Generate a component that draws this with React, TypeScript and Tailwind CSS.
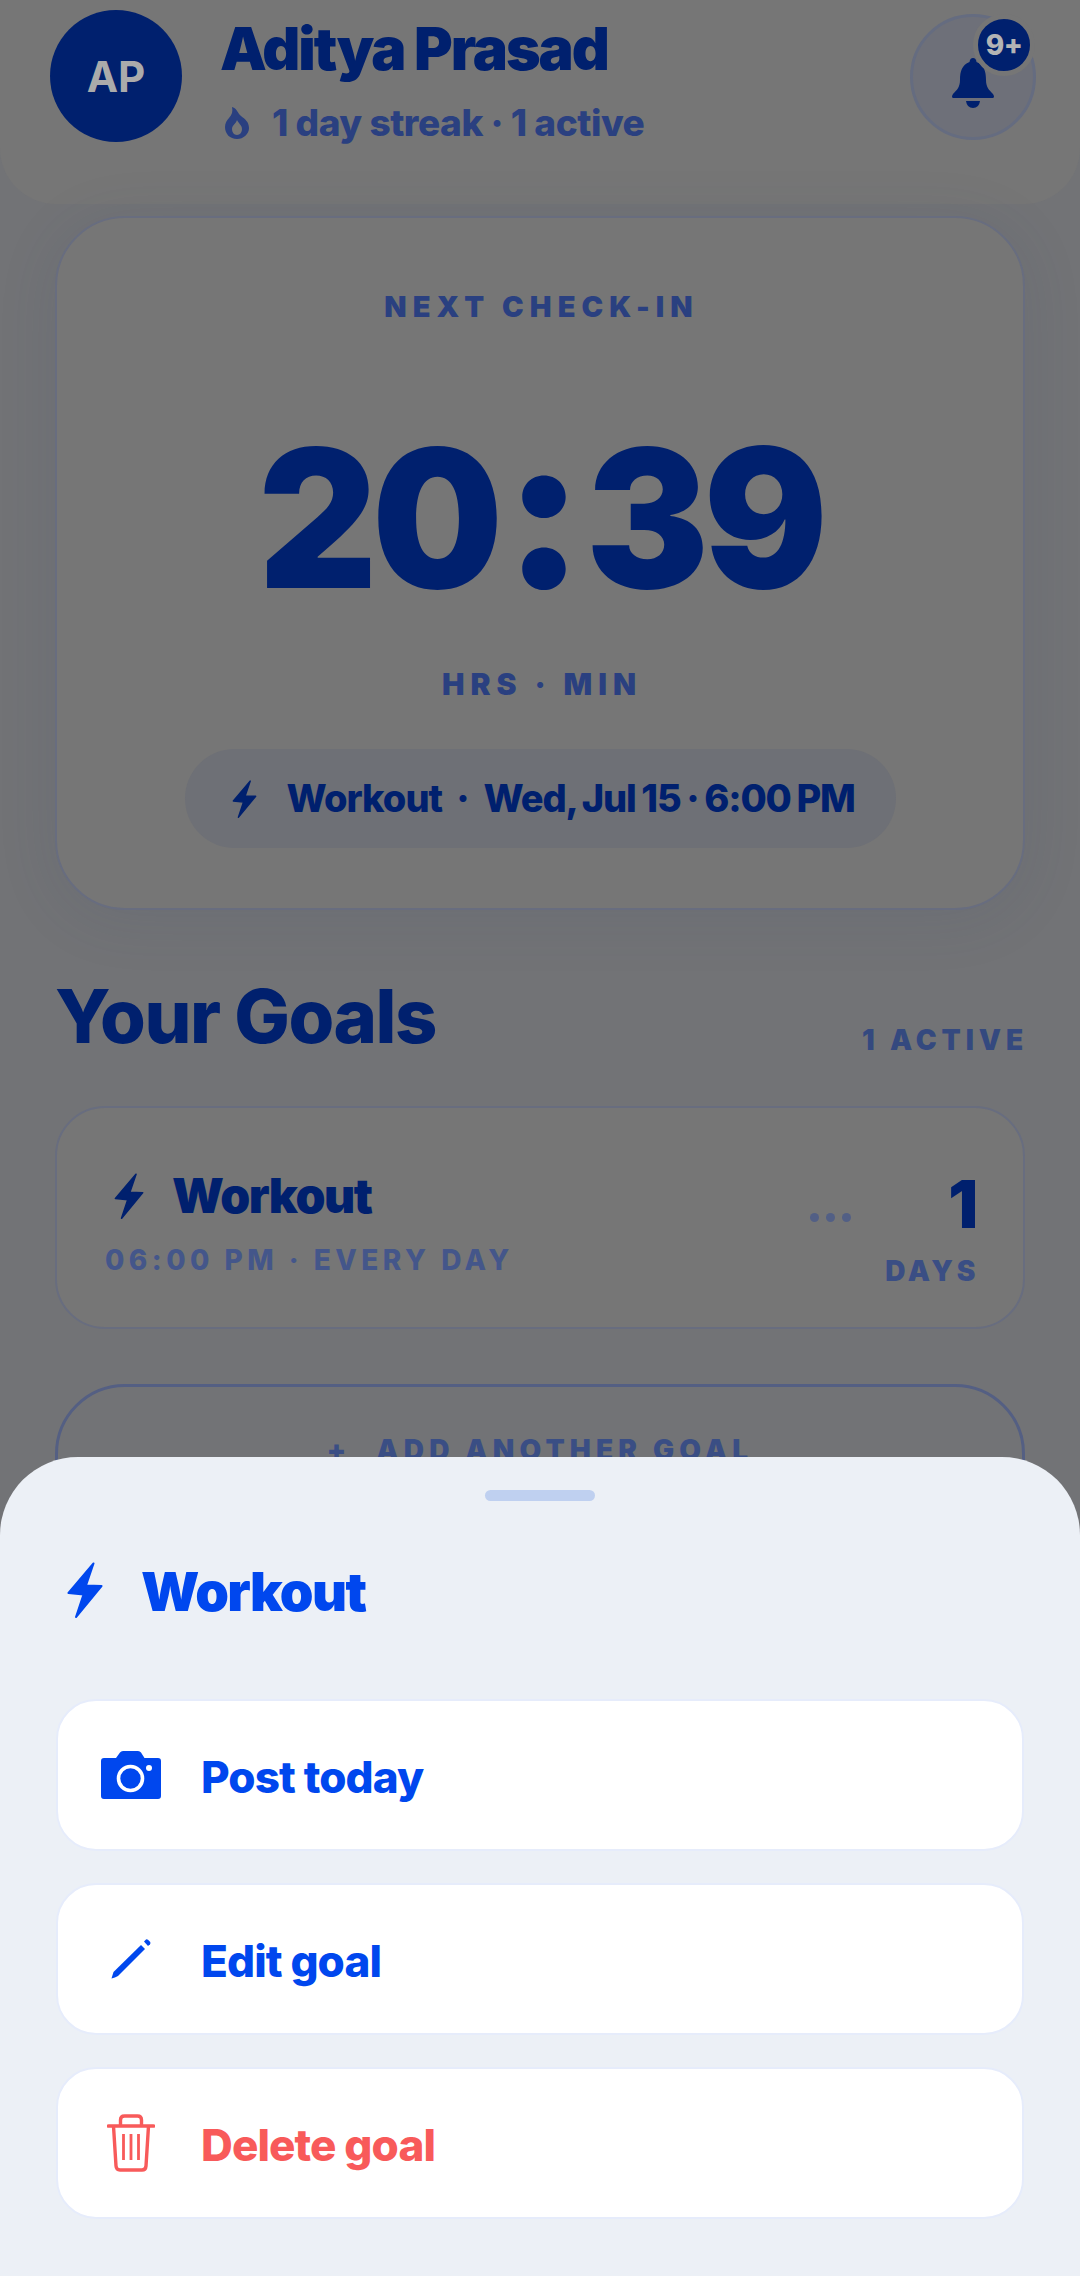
function Bolt({ className }: { className: string }) {
  return (
    <svg viewBox="0 0 36 56" className={className} aria-hidden="true">
      <path d="M26.5 1.5 L1.5 31 L16.5 32.5 L9 55 L34.5 24 L19 23.5 Z" fill="currentColor" stroke="currentColor" strokeWidth="2" strokeLinejoin="round" />
    </svg>
  );
}

function Camera() {
  return (
    <svg viewBox="0 0 60 48" className="w-[60px] h-[48px] text-[#0047ee]" aria-hidden="true">
      <path d="M3 7 H15 L19 1.5 Q20 0 22 0 H37 Q39 0 40 1.5 L43.5 7 H57 Q60 7 60 10 V45 Q60 48 57 48 H3 Q0 48 0 45 V10 Q0 7 3 7 Z" fill="currentColor" />
      <circle cx="29.5" cy="27.5" r="12" fill="none" stroke="#fff" strokeWidth="3.6" />
      <circle cx="48" cy="17" r="3" fill="#fff" />
    </svg>
  );
}

function Pencil() {
  return (
    <svg viewBox="0 0 40 40" className="w-[40px] h-[40px] text-[#0047ee]" aria-hidden="true">
      <path d="M0.5 39.5 L2.5 33 L30 6 L34 10 L7 37 Q4 38.5 0.5 39.5 Z" fill="currentColor" />
      <path d="M33 2.5 L35 0.4 Q36 0 37 0.8 L39 2.8 Q40 4 39 5.2 L37 7 Z" fill="currentColor" />
    </svg>
  );
}

function Trash() {
  return (
    <svg viewBox="0 0 48 58" className="w-[48px] h-[58px] text-[#f85a5a]" fill="none" stroke="currentColor" aria-hidden="true">
      <path d="M1.5 12 H46.5" strokeWidth="3.6" strokeLinecap="round" />
      <path d="M13.5 11 V6 Q13.5 2 17.5 2 H30.5 Q34.5 2 34.5 6 V11" strokeWidth="3.4" />
      <path d="M6.5 12 L9 52 Q9.3 56 13 56 H35 Q38.7 56 39 52 L41.5 12" strokeWidth="3.4" />
      <path d="M16.5 20 V46 M24 20 V46 M31.5 20 V46" strokeWidth="2.8" />
    </svg>
  );
}

function Bell() {
  return (
    <svg viewBox="0 0 44 50" className="w-[44px] h-[50px] text-[#00206e]" aria-hidden="true">
      <path d="M22 0 Q25 0 25.5 4 C33 7 35 13 35 22 C35 29 38 32 42 36 Q44 39 42 40 H2 Q0 39 2 36 C6 32 9 29 9 22 C9 13 11 7 18.5 4 Q19 0 22 0 Z" fill="currentColor" />
      <path d="M15 43 H29 Q28 50 22 50 Q16 50 15 43 Z" fill="currentColor" />
    </svg>
  );
}

function Flame() {
  return (
    <svg viewBox="0 0 26 32" className="w-[26px] h-[32px] text-[#2a4080]" aria-hidden="true">
      <path fillRule="evenodd" fill="currentColor" d="M8 0 C14 2 13 6 17 9 C21 12 25 15 25 21 C25 27 19.5 32 13 32 C6 32 1 27 1 20 C1 16 3 13 5 11 C8 8 9 4 8 0 Z M13 13 C14 16 18 18 18 22 C18 25 16 28 13 28 C10 28 8 25 8 22 C8 18 12 17 13 13 Z" />
    </svg>
  );
}

function Row({ icon, label, color }: { icon: React.ReactNode; label: string; color: string }) {
  return (
    <div className="h-[152px] rounded-[40px] bg-white border-2 border-[#e6ecfb] flex items-center">
      <div className="w-[143px] pl-[3px] flex justify-center shrink-0">{icon}</div>
      <span className={`pt-[3px] text-[44px] font-extrabold tracking-[-0.02em] ${color}`}>{label}</span>
    </div>
  );
}

export default function App() {
  return (
    <div className="relative w-[1080px] h-[2276px] overflow-hidden bg-[#727376] font-['Inter',sans-serif]">
      <header className="h-[204px] bg-[#767676] rounded-b-[56px] flex items-start justify-between pl-[50px] pr-[44px] pt-[10px]">
        <div className="flex items-start gap-[38px]">
          <div className="w-[132px] h-[132px] rounded-full bg-[#00206e] flex items-center justify-center text-[#ababab] text-[42px] font-bold">AP</div>
          <div className="pt-[5px]">
            <div className="text-[59px] leading-[68px] font-black tracking-[-0.035em] text-[#00206e]">Aditya Prasad</div>
            <div className="mt-[20px] ml-[4px] flex items-center gap-[22px] text-[37px] leading-[40px] font-extrabold tracking-[-0.012em] text-[#2a4080]">
              <Flame />
              <span>1 day streak · 1 active</span>
            </div>
          </div>
        </div>
        <div className="relative mt-[4px] w-[126px] h-[126px] rounded-full bg-[#6e7079] border-[3px] border-[#656c80] flex items-center justify-center">
          <div className="mt-[12px]"><Bell /></div>
          <div className="absolute -top-[3px] -right-[2px] w-[62px] h-[62px] rounded-full bg-[#00206e] border-[5px] border-[#767676] flex items-center justify-center text-[#b4b4b4] text-[28px] font-extrabold tracking-[-0.02em]">9+</div>
        </div>
      </header>

      <main className="px-[55px]">
        <section className="mt-[12px] h-[694px] rounded-[70px] bg-[#767676] border-2 border-[#686d7f] flex flex-col items-center shadow-[0_8px_60px_rgba(60,70,110,0.12)]">
          <div className="mt-[72px] ml-[3px] text-[29px] leading-[34px] font-black tracking-[0.21em] text-[#2a4080]">NEXT CHECK-IN</div>
          <div className="mt-[104px] h-[180px] flex items-center text-[193px] leading-none font-black tracking-[-0.03em] text-[#00206e] scale-x-[0.955]">
            <span>20</span><span className="mx-[9px] text-[215px] -translate-y-[9px] scale-x-[1.05]">:</span><span>39</span>
          </div>
          <div className="mt-[58px] ml-[4px] text-[30px] leading-[36px] font-black tracking-[0.2em] text-[#2a4080]">HRS · MIN</div>
          <div className="mt-[47px] w-[711px] h-[99px] rounded-full bg-[#6e7076] flex items-center pl-[47px] text-[#00206e]">
            <Bolt className="w-[25px] h-[38px]" />
            <span className="ml-[30px] text-[38px] font-extrabold tracking-[-0.025em]">Workout</span>
            <span className="ml-[14px] text-[38px] font-extrabold">·</span>
            <span className="ml-[14px] text-[38px] font-extrabold tracking-[-0.03em] [word-spacing:-0.04em]">Wed, Jul 15 · 6:00 PM</span>
          </div>
        </section>

        <div className="mt-[64px] flex items-end justify-between">
          <h2 className="text-[74px] leading-[85px] font-extrabold tracking-[-0.02em] text-[#00206e]">Your Goals</h2>
          <span className="mb-[2px] -mr-[3px] text-[28px] leading-[34px] font-black tracking-[0.175em] text-[#34497f]">1 ACTIVE</span>
        </div>

        <section className="mt-[47px] h-[223px] rounded-[50px] bg-[#767676] border-2 border-[#686d7f] flex justify-between pl-[48px] pr-[45px]">
          <div className="pt-[59px]">
            <div className="flex items-center text-[#00206e]">
              <Bolt className="ml-[9px] w-[30px] h-[46px]" />
              <span className="ml-[28px] text-[48px] leading-[58px] font-black tracking-[-0.03em]">Workout</span>
            </div>
            <div className="mt-[18px] text-[28px] leading-[34px] font-extrabold tracking-[0.16em] text-[#44568a]">06:00 PM · EVERY DAY</div>
          </div>
          <div className="flex items-start">
            <div className="mt-[105px] mr-[34px] flex gap-[7px]">
              <span className="w-[9px] h-[9px] rounded-full bg-[#525f85]"></span>
              <span className="w-[9px] h-[9px] rounded-full bg-[#525f85]"></span>
              <span className="w-[9px] h-[9px] rounded-full bg-[#525f85]"></span>
            </div>
            <div className="flex flex-col items-end pt-[61px]">
              <span className="text-[66px] leading-[70px] font-black text-[#00206e]">1</span>
              <span className="mt-[15px] -mr-[1px] text-[28px] leading-[34px] font-black tracking-[0.13em] text-[#3a4e84]">DAYS</span>
            </div>
          </div>
        </section>

        <section className="mt-[55px] h-[200px] rounded-[70px] border-[3px] border-[#545f83] flex justify-center pt-[46px]">
          <div className="flex gap-[25px] text-[28px] leading-[34px] font-black tracking-[0.185em] text-[#3a4e84]"><span>+</span><span>ADD ANOTHER GOAL</span></div>
        </section>
      </main>

      <div className="absolute left-0 right-0 bottom-0 h-[819px] rounded-t-[78px] bg-[#ecf0f6] px-[56px] pt-[33px]">
        <div className="mx-auto w-[110px] h-[11px] rounded-full bg-[#bfd0f0]"></div>
        <div className="mt-[61px] flex items-center h-[56px] text-[#0047ee]">
          <Bolt className="ml-[11px] w-[36px] h-[56px]" />
          <span className="ml-[38px] pt-[2px] text-[54px] font-black tracking-[-0.03em]">Workout</span>
        </div>
        <div className="mt-[81px] flex flex-col gap-[32px]">
          <Row icon={<Camera />} label="Post today" color="text-[#0047ee]" />
          <Row icon={<Pencil />} label="Edit goal" color="text-[#0047ee]" />
          <Row icon={<Trash />} label="Delete goal" color="text-[#f85a5a]" />
        </div>
      </div>
    </div>
  );
}
